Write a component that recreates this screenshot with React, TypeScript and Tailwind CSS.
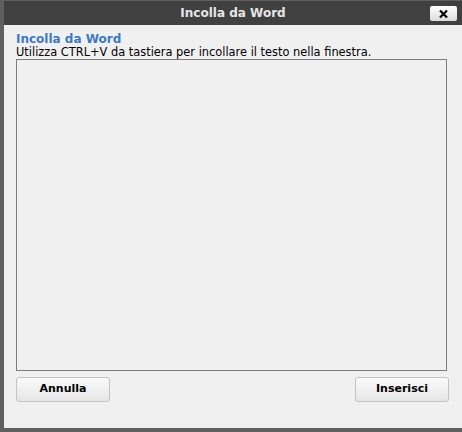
const App = () => {
  return (
    <div className="w-[462px] h-[432px] bg-[#5f5f5f] pt-[1px] pl-[4px] font-['DejaVu_Sans',sans-serif] overflow-hidden">
      <div className="w-[458px] h-[427px] flex flex-col bg-[#f0f0f0]">
        <div className="h-[24px] bg-[#404040] flex items-center justify-center relative shrink-0">
          <span className="text-[12px] font-bold text-[#e6e6e6]">Incolla da Word</span>
          <button className="absolute right-[5px] top-[5px] w-[27px] h-[15px] rounded-[2px] bg-gradient-to-b from-white to-[#dcdcdc] flex items-center justify-center">
            <svg width="11" height="10" viewBox="0 0 11 10">
              <path d="M2 1.5 L9 8.5 M9 1.5 L2 8.5" stroke="#000" strokeWidth="2.2" />
            </svg>
          </button>
        </div>
        <div className="flex-1 flex flex-col px-[12px] pt-[7px]">
          <h2 className="text-[12px] font-bold text-[#3b7ac6] leading-[14px]">Incolla da Word</h2>
          <p className="text-[11.4px] text-black leading-[12px]">
            Utilizza CTRL+V da tastiera per incollare il testo nella finestra.
          </p>
          <div className="mt-[1px] w-[431px] h-[312px] border border-[#7d7d7d] bg-[#f0f0f0]" />
          <div className="flex justify-between mt-[6px] w-[433px]">
            <button className="w-[94px] h-[25px] rounded-[3px] border border-[#c3c3c3] bg-gradient-to-b from-[#fafafa] to-[#e6e6e6] text-[11px] font-bold text-black">
              Annulla
            </button>
            <button className="w-[94px] h-[25px] rounded-[3px] border border-[#c3c3c3] bg-gradient-to-b from-[#fafafa] to-[#e6e6e6] text-[11px] font-bold text-black">
              Inserisci
            </button>
          </div>
        </div>
      </div>
    </div>
  );
};

export default App;
